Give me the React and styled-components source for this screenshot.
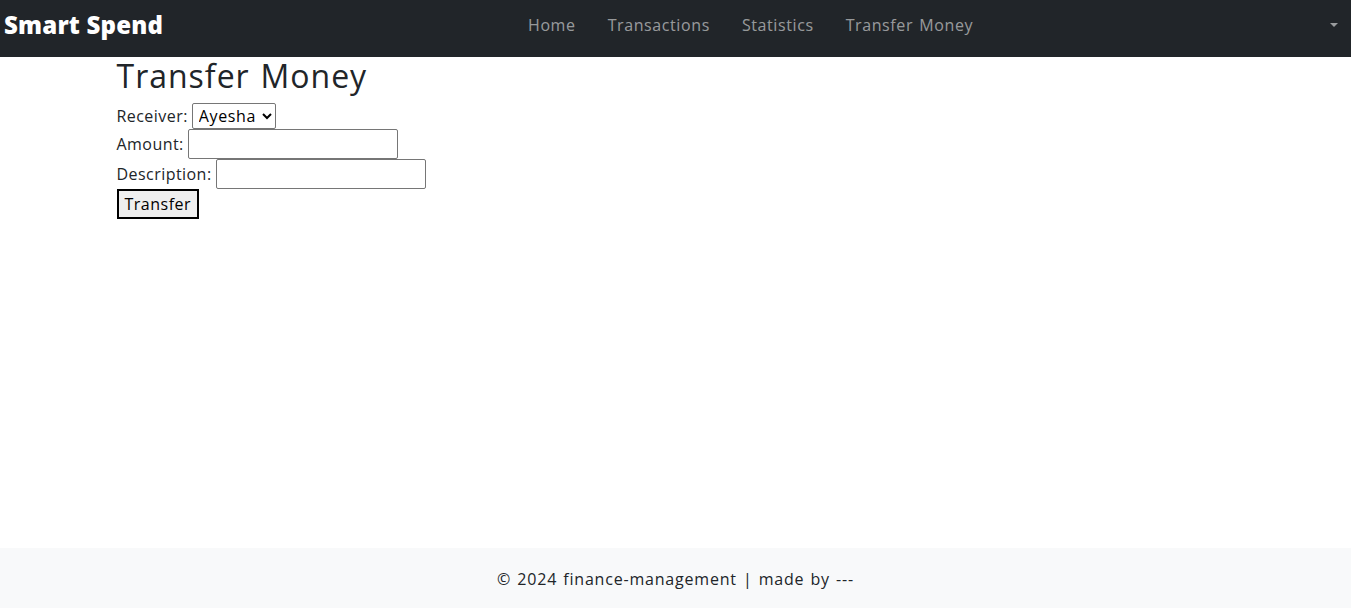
import React from "react";
import styled, { createGlobalStyle } from "styled-components";

const Global = createGlobalStyle`
  html, body { margin: 0; padding: 0; }
  body {
    font-family: "Open Sans", "Noto Sans", sans-serif;
    font-size: 16px;
    line-height: 1.5;
    letter-spacing: 0.6px;
    word-spacing: 1.5px;
    color: #212529;
    background: #fff;
  }
  * { box-sizing: border-box; }
`;

const Page = styled.div`
  min-height: 608px;
  display: flex;
  flex-direction: column;
`;

const Navbar = styled.nav`
  height: 57px;
  background: #212529;
  display: flex;
  align-items: center;
  padding: 0 4px 7px;
  position: relative;
`;

const Brand = styled.a`
  font-size: 24px;
  font-weight: 800;
  color: #fff;
  text-decoration: none;
  letter-spacing: 0.2px;
  word-spacing: 0;
  line-height: 1;
`;

const NavLinks = styled.ul`
  list-style: none;
  margin: 0;
  padding: 0 0 7px;
  display: flex;
  position: absolute;
  left: 512px;
  top: 0;
  height: 57px;
  align-items: center;
`;

const NavLink = styled.a`
  display: block;
  padding: 8px 16px;
  color: rgba(255, 255, 255, 0.55);
  text-decoration: none;
  font-size: 16px;
`;

const Caret = styled.span`
  margin-left: auto;
  margin-right: 9px;
  width: 0;
  height: 0;
  border-left: 4px solid transparent;
  border-right: 4px solid transparent;
  border-top: 4px solid rgba(255, 255, 255, 0.55);
`;

const Container = styled.main`
  flex: 1;
  width: 1140px;
  margin: 0 auto;
  padding: 0 12px 0 11px;
`;

const Title = styled.h2`
  font-size: 32px;
  font-weight: 500;
  line-height: 1.2;
  letter-spacing: 1px;
  margin: 0 0 8px;
`;

const Form = styled.form`
  display: flex;
  flex-direction: column;
  align-items: flex-start;
`;

const Row = styled.div`
  display: flex;
  align-items: center;
  gap: 4px;
`;

const Label = styled.label`
  font-size: 16px;
  letter-spacing: 0.45px;
`;

const Select = styled.select`
  font-family: inherit;
  font-size: 16px;
  letter-spacing: 0.6px;
  height: 26px;
  padding: 0 2px;
  border: 1px solid #767676;
  border-radius: 2px;
  background: #fff;
  color: #000;
`;

const Input = styled.input`
  width: 210px;
  height: 30px;
  border: 1px solid #767676;
  border-radius: 2px;
  padding: 1px 2px;
  font-family: inherit;
  font-size: 16px;
`;

const Button = styled.button`
  font-family: inherit;
  font-size: 16px;
  letter-spacing: 0.5px;
  height: 30px;
  padding: 0 6px;
  background: #efefef;
  border: 2px solid #000;
  color: #000;
  line-height: 1;
`;

const Footer = styled.footer`
  height: 60px;
  background: #f8f9fa;
  display: flex;
  align-items: center;
  justify-content: center;
  padding-top: 2px;
  font-size: 16px;
  letter-spacing: 0.8px;
  word-spacing: 1.2px;
  color: #212529;
`;

export default function App() {
  return (
    <Page>
      <Global />
      <Navbar>
        <Brand href="#">Smart Spend</Brand>
        <NavLinks>
          <li><NavLink href="#">Home</NavLink></li>
          <li><NavLink href="#">Transactions</NavLink></li>
          <li><NavLink href="#">Statistics</NavLink></li>
          <li><NavLink href="#">Transfer Money</NavLink></li>
        </NavLinks>
        <Caret />
      </Navbar>
      <Container>
        <Title>Transfer Money</Title>
        <Form onSubmit={(e) => e.preventDefault()}>
          <Row>
            <Label>Receiver:</Label>
            <Select defaultValue="Ayesha">
              <option>Ayesha</option>
            </Select>
          </Row>
          <Row>
            <Label>Amount:</Label>
            <Input type="text" />
          </Row>
          <Row>
            <Label>Description:</Label>
            <Input type="text" />
          </Row>
          <Button type="submit">Transfer</Button>
        </Form>
      </Container>
      <Footer>© 2024 finance-management | made by ---</Footer>
    </Page>
  );
}
